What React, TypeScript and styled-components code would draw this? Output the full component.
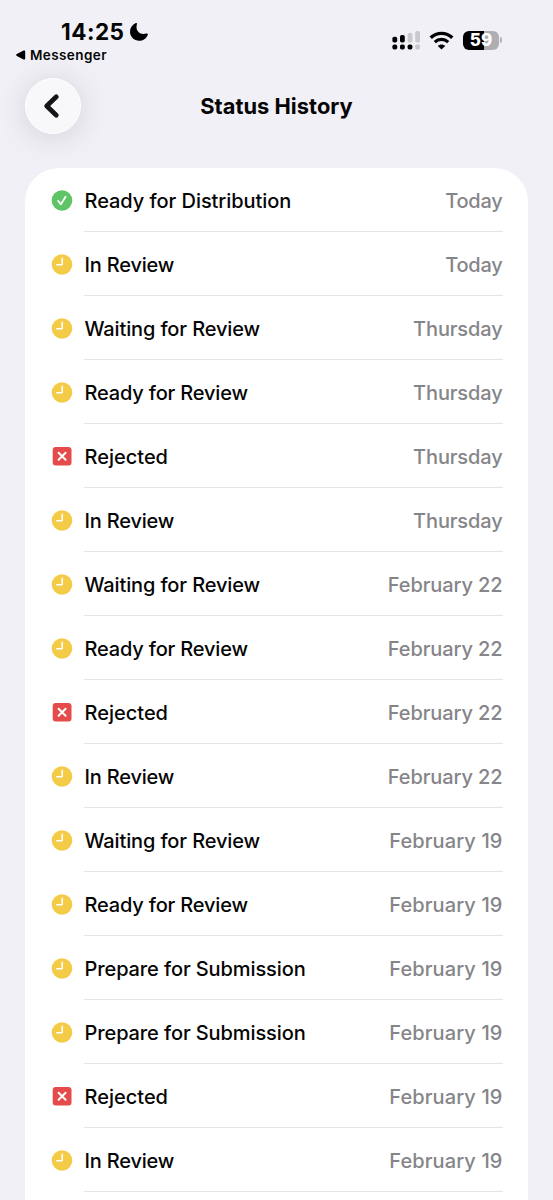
import React from 'react';
import styled, { createGlobalStyle } from 'styled-components';

const GlobalStyle = createGlobalStyle`
  * { box-sizing: border-box; }
  body { margin: 0; background: #f1f0f6; }
`;

const Screen = styled.main`
  width: 553px;
  height: 1200px;
  overflow: hidden;
  display: flex;
  flex-direction: column;
  background: #f1f0f6;
  color: #050505;
  font-family: Inter, 'Liberation Sans', sans-serif;
`;

const StatusBar = styled.div`
  flex: none;
  height: 78px;
  padding: 18px 51px 0 15px;
  display: flex;
  justify-content: space-between;
`;

const ClockRow = styled.div`
  display: flex;
  align-items: center;
  height: 27px;
  padding-left: 45px;
`;

const Time = styled.span`
  width: 69px;
  padding-left: 1px;
  font-size: 22.5px;
  font-weight: 750;
  line-height: 27px;
  letter-spacing: 0.5px;
  white-space: nowrap;
`;

const BackToApp = styled.div`
  display: flex;
  align-items: center;
  gap: 4px;
  height: 20px;
  font-size: 13.5px;
  font-weight: 600;
  letter-spacing: 0.4px;
`;

const Indicators = styled.div`
  display: flex;
  align-items: center;
  height: 22px;
  margin-top: 11px;
`;

const Signal = styled.svg`
  margin-right: 8px;
`;

const Wifi = styled.svg`
  margin-right: 9px;
`;

const NavBar = styled.header`
  flex: none;
  height: 90px;
  padding: 0 25px;
  display: grid;
  grid-template-columns: 56px 1fr 56px;
`;

const BackButton = styled.button`
  width: 56px;
  height: 56px;
  padding: 0 3px 1px 0;
  border: 1px solid #ffffff;
  border-radius: 50%;
  background: #f8f8fb;
  box-shadow: 0 3px 30px rgba(40, 40, 60, 0.15);
  display: flex;
  align-items: center;
  justify-content: center;
`;

const Title = styled.h1`
  margin: 0;
  height: 56px;
  line-height: 56px;
  text-align: center;
  font-size: 21.8px;
  font-weight: 720;
  letter-spacing: 0.05px;
`;

const Card = styled.ul`
  flex: 1;
  list-style: none;
  margin: 0 25px;
  padding: 0 25px 0 26px;
  border-radius: 34px 34px 0 0;
  background: #ffffff;
`;

const Row = styled.li`
  display: flex;
  align-items: center;
  height: 64px;
`;

const IconSlot = styled.span`
  width: 33px;
  height: 22px;
  flex: none;
`;

const RowBody = styled.div`
  flex: 1;
  height: 64px;
  padding-top: 2px;
  display: flex;
  align-items: center;
  justify-content: space-between;
  border-bottom: 1px solid #e4e4e6;
  font-size: 20px;
  white-space: nowrap;
`;

const Label = styled.span<{ $tracking: number }>`
  font-weight: 530;
  padding-left: 0.5px;
  letter-spacing: ${(p) => p.$tracking}px;
`;

const When = styled.span<{ $tracking: number }>`
  font-weight: 450;
  color: #858589;
  padding-right: 0.5px;
  letter-spacing: ${(p) => p.$tracking}px;
`;

type Kind = 'done' | 'pending' | 'rejected';

const StatusIcon = ({ kind }: { kind: Kind }) => (
  <svg width="22" height="22" viewBox="0 -0.5 22 22" fill="none">
    {kind === 'done' && (
      <>
        <circle cx="11" cy="11" r="10.3" fill="#5fc466" />
        <path d="M7.2 11.5l2.7 3.2 4.7-7.5" stroke="#fff" strokeWidth="1.8" strokeLinecap="round" strokeLinejoin="round" />
      </>
    )}
    {kind === 'pending' && (
      <>
        <circle cx="11" cy="11" r="10.3" fill="#f3cb46" />
        <path d="M11.2 4.7v6.6H5.7" stroke="#fff" strokeWidth="1.6" strokeLinecap="round" strokeLinejoin="round" />
      </>
    )}
    {kind === 'rejected' && (
      <>
        <rect x="1.7" y="1.5" width="18.8" height="18.6" rx="3" fill="#e64b4b" />
        <path d="M7.6 7.3l7 7M14.6 7.3l-7 7" stroke="#fff" strokeWidth="2" strokeLinecap="round" />
      </>
    )}
  </svg>
);

const labelTracking: Record<string, number> = {
  'Ready for Distribution': -0.05,
  'In Review': -0.19,
  'Waiting for Review': -0.13,
  'Ready for Review': -0.17,
  'Prepare for Submission': -0.1,
  Rejected: 0,
};

const dateTracking: Record<string, number> = {
  'February 19': 0.1,
  'February 22': -0.1,
  Thursday: -0.14,
  Today: -0.25,
};

const history: [Kind, string, string][] = [
  ['done', 'Ready for Distribution', 'Today'],
  ['pending', 'In Review', 'Today'],
  ['pending', 'Waiting for Review', 'Thursday'],
  ['pending', 'Ready for Review', 'Thursday'],
  ['rejected', 'Rejected', 'Thursday'],
  ['pending', 'In Review', 'Thursday'],
  ['pending', 'Waiting for Review', 'February 22'],
  ['pending', 'Ready for Review', 'February 22'],
  ['rejected', 'Rejected', 'February 22'],
  ['pending', 'In Review', 'February 22'],
  ['pending', 'Waiting for Review', 'February 19'],
  ['pending', 'Ready for Review', 'February 19'],
  ['pending', 'Prepare for Submission', 'February 19'],
  ['pending', 'Prepare for Submission', 'February 19'],
  ['rejected', 'Rejected', 'February 19'],
  ['pending', 'In Review', 'February 19'],
];

const Battery = styled.div`
  display: flex;
  align-items: center;
  gap: 1px;
`;

const BatteryBody = styled.div`
  width: 36px;
  height: 19px;
  border-radius: 6px;
  background: linear-gradient(90deg, #000 59%, #aeaeb3 59%);
  color: #fff;
  font-size: 17px;
  font-weight: 800;
  line-height: 19px;
  text-align: center;
`;

const BatteryTip = styled.div`
  width: 2px;
  height: 6px;
  border-radius: 0 2px 2px 0;
  background: #b2b2b7;
`;

export default function App() {
  return (
    <>
      <GlobalStyle />
      <Screen>
        <StatusBar>
          <div>
            <ClockRow>
              <Time>14:25</Time>
              <svg width="20" height="20" viewBox="0 0 20 20">
                <path
                  d="M6.4 1.3C7.4.8 8.2 1.2 7.9 2.3C6.1 8.5 10.4 13.3 17.2 11.6C18.4 11.2 19.2 11.9 18.7 13C17.3 16.6 14 18.8 10.2 18.8C5.1 18.8 1 14.9 1 9.8C1 6 3.1 2.8 6.4 1.3Z"
                  fill="#000"
                />
              </svg>
            </ClockRow>
            <BackToApp>
              <svg width="11" height="10" viewBox="0 0 11 10">
                <path d="M1.8 4.1L8.6.6C9.6.1 10.2.6 10.2 1.6v6.8c0 1-.6 1.5-1.6 1L1.8 5.9C.8 5.3.8 4.7 1.8 4.1Z" fill="#000" />
              </svg>
              Messenger
            </BackToApp>
          </div>
          <Indicators>
            <Signal width="29" height="20" viewBox="0 0 29 20">
              <g fill="#000">
                <rect x="0.4" y="6.8" width="4.8" height="5.7" rx="1.8" />
                <rect x="8" y="5" width="4.8" height="7.5" rx="1.8" />
                <rect x="0.4" y="14.5" width="4.8" height="5" rx="1.8" />
                <rect x="8" y="14.5" width="4.8" height="5" rx="1.8" />
                <rect x="15.6" y="14.5" width="4.8" height="5" rx="1.8" />
              </g>
              <g fill="#c8c8cd">
                <rect x="15.6" y="3" width="4.8" height="9.5" rx="1.8" />
                <rect x="23.2" y="1" width="4.8" height="11.5" rx="1.8" />
                <rect x="23.2" y="14.5" width="4.8" height="5" rx="1.8" />
              </g>
            </Signal>
            <Wifi width="25" height="19" viewBox="0 0 25 19" fill="none">
              <path d="M1.7 6.8C7.8.9 17.2.9 23.3 6.8" stroke="#000" strokeWidth="3.4" />
              <path d="M5.8 11.1c3.8-3.6 9.6-3.6 13.4 0" stroke="#000" strokeWidth="3.2" />
              <path d="M12.5 18.6L8.8 14.9c2-2 5.4-2 7.4 0Z" fill="#000" />
            </Wifi>
            <Battery>
              <BatteryBody>59</BatteryBody>
              <BatteryTip />
            </Battery>
          </Indicators>
        </StatusBar>
        <NavBar>
          <BackButton aria-label="Back">
            <svg width="20" height="28" viewBox="0 0 20 28" fill="none">
              <path d="M14.3 4.8L4.7 14l9.6 9.2" stroke="#151517" strokeWidth="4.8" strokeLinecap="round" strokeLinejoin="round" />
            </svg>
          </BackButton>
          <Title>Status History</Title>
        </NavBar>
        <Card>
          {history.map(([kind, label, when], index) => (
            <Row key={index}>
              <IconSlot>
                <StatusIcon kind={kind} />
              </IconSlot>
              <RowBody>
                <Label $tracking={labelTracking[label] ?? 0}>{label}</Label>
                <When $tracking={dateTracking[when] ?? 0}>{when}</When>
              </RowBody>
            </Row>
          ))}
        </Card>
      </Screen>
    </>
  );
}
